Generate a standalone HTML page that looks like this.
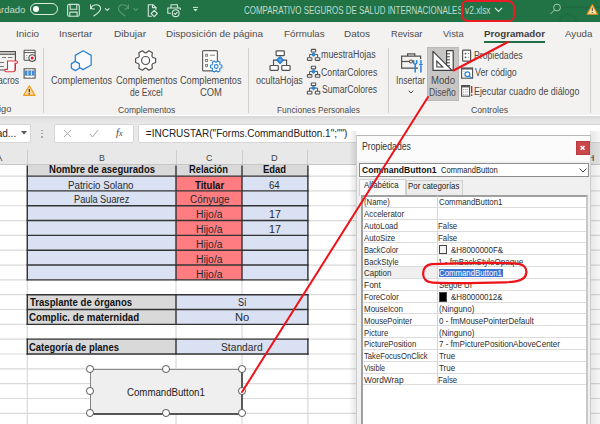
<!DOCTYPE html><html><head><meta charset="utf-8"><style>
*{margin:0;padding:0;box-sizing:border-box}
html,body{width:600px;height:424px;overflow:hidden;background:#fff;font-family:"Liberation Sans",sans-serif}
.a{position:absolute}
.t{position:absolute;white-space:nowrap;line-height:1;transform-origin:0 0}
.sep{position:absolute;width:1px;background:#d2d0ce;top:48px;height:65px}
</style></head><body>
<div class="a" style="left:0;top:0;width:600px;height:21.5px;background:#217346"></div>
<div class="t" style="left:-4.30px;top:4.80px;font-size:9.5px;color:#c3dacb;font-weight:normal;font-family:'Liberation Sans';">ardado</div>
<div class="a" style="left:29.5px;top:3px;width:28.5px;height:12px;border:1.2px solid #dcebe1;border-radius:6px"></div>
<div class="a" style="left:32.5px;top:6px;width:6px;height:6px;background:#fff;border-radius:50%"></div>
<svg class="a" style="left:60px;top:0" width="24" height="22" viewBox="60 0 24 22"><g fill="none" stroke="#d3e6da" stroke-width="1.1" stroke-linejoin="round"><rect x="67.6" y="4.4" width="11.7" height="11.9" rx="1.6"/><path d="M70.2 4.6 V9.2 H76.8 V4.6"/><path d="M69.8 16.2 V12.1 H77.1 V16.2"/></g></svg>
<svg class="a" style="left:0;top:0" width="210" height="22" viewBox="0 0 210 22"><g fill="none" stroke="#d3e6da" stroke-width="1.1" stroke-linecap="round" stroke-linejoin="round"><path d="M90.6 4.8 L90.6 8.6 L94.4 9"/><path d="M90.8 8.4 C92.8 3.6 100.5 3.2 100.5 8.8 C100.5 11.2 97.5 13.6 93.8 16"/><path d="M105.3 8.6 L107.2 10.4 L109.1 8.6"/><path d="M148.3 4.8 H153.2 L156 7.6 V9.5 M148.3 4.8 V16.3 H151.5"/><path d="M152.5 4.8 V7.6 H156"/><path d="M154.2 10.3 L157.3 13.5 L154.2 16.6 L151.1 13.5 Z"/><path d="M171 7.8 V4.8 H177.5 V7.8"/><path d="M170.5 13.3 H167.8 V8 H180.3 V9.5"/><circle cx="175.7" cy="13.2" r="3.4"/><path d="M174.1 13.3 L175.3 14.4 L177.3 12.2"/></g><g fill="none" stroke="#5c9a72" stroke-width="1.1" stroke-linecap="round" stroke-linejoin="round"><path d="M128.4 4.8 L128.4 8.6 L124.6 9"/><path d="M128.2 8.4 C126.2 3.6 118.5 3.2 118.5 8.8 C118.5 11.2 121.5 13.6 125.2 16"/><path d="M134 8.6 L135.9 10.4 L137.8 8.6"/></g><path d="M193 7.4 H198" stroke="#d3e6da" stroke-width="1"/><path d="M193.3 9 L195.5 11.4 L197.7 9 Z" fill="#d3e6da"/></svg>
<div class="t" style="left:243.63px;top:5.50px;font-size:10px;color:#c3dacb;font-weight:normal;font-family:'Liberation Sans';transform:scaleX(0.7946);">COMPARATIVO SEGUROS DE SALUD INTERNACIONALES</div>
<div class="t" style="left:465.00px;top:5.50px;font-size:10px;color:#c3dacb;font-weight:normal;font-family:'Liberation Sans';transform:scaleX(0.8344);">v2.xlsx</div>
<svg class="a" style="left:494px;top:7px" width="9" height="6" viewBox="0 0 9 6"><path d="M1 1 L4.5 4.5 L8 1" fill="none" stroke="#d3e6da" stroke-width="1.1"/></svg>
<svg class="a" style="left:540px;top:0" width="60" height="22" viewBox="540 0 60 22"><path d="M561 7.2 H600" stroke="#1d6a3f" stroke-width="1.6"/><path d="M560 22 A8 8 0 0 1 576 22" fill="none" stroke="#1f6c41" stroke-width="1.6"/><g fill="none" stroke="#a6cbb3" stroke-width="1"><circle cx="557" cy="7.5" r="3.4"/><path d="M554.6 9.9 L550.5 14"/></g><path d="M592.3 4.5 L597.6 14.2 H587 Z" fill="#fbe3a6" stroke="#e8890c" stroke-width="1.1" stroke-linejoin="round"/><path d="M592.3 7.5 V11 M592.3 12 V13" stroke="#555" stroke-width="1.1"/></svg>
<div class="a" style="left:461px;top:-0.5px;width:53.5px;height:22px;border:2px solid #ec1c24;border-radius:6px 7px 6px 7px"></div>
<div class="a" style="left:0;top:22px;width:600px;height:93px;background:#f3f2f1"></div>
<div class="t" style="left:15.53px;top:28.80px;font-size:9.8px;color:#4e4e4e;font-weight:normal;font-family:'Liberation Sans';transform:scaleX(1.0085);">Inicio</div>
<div class="t" style="left:59.03px;top:28.80px;font-size:9.8px;color:#4e4e4e;font-weight:normal;font-family:'Liberation Sans';">Insertar</div>
<div class="t" style="left:113.61px;top:28.80px;font-size:9.8px;color:#4e4e4e;font-weight:normal;font-family:'Liberation Sans';transform:scaleX(1.0320);">Dibujar</div>
<div class="t" style="left:165.93px;top:28.80px;font-size:9.8px;color:#4e4e4e;font-weight:normal;font-family:'Liberation Sans';transform:scaleX(1.0118);">Disposición de página</div>
<div class="t" style="left:283.64px;top:28.80px;font-size:9.8px;color:#4e4e4e;font-weight:normal;font-family:'Liberation Sans';transform:scaleX(0.9957);">Fórmulas</div>
<div class="t" style="left:344.22px;top:28.80px;font-size:9.8px;color:#4e4e4e;font-weight:normal;font-family:'Liberation Sans';transform:scaleX(1.0192);">Datos</div>
<div class="t" style="left:390.88px;top:28.80px;font-size:9.8px;color:#4e4e4e;font-weight:normal;font-family:'Liberation Sans';transform:scaleX(0.9443);">Revisar</div>
<div class="t" style="left:442.70px;top:28.80px;font-size:9.8px;color:#4e4e4e;font-weight:normal;font-family:'Liberation Sans';transform:scaleX(0.9552);">Vista</div>
<div class="t" style="left:564.60px;top:28.80px;font-size:9.8px;color:#4e4e4e;font-weight:normal;font-family:'Liberation Sans';transform:scaleX(0.9902);">Ayuda</div>
<div class="t" style="left:483.79px;top:28.80px;font-size:9.8px;color:#404040;font-weight:bold;font-family:'Liberation Sans';transform:scaleX(0.9920);">Programador</div>
<div class="a" style="left:484px;top:40.5px;width:61px;height:2px;background:#1e7145"></div>
<div class="a" style="left:0;top:115.5px;width:600px;height:8px;background:linear-gradient(#d6d6d6,#e3e3e3 40%,#e8e8e8)"></div>
<div class="sep" style="left:43px"></div>
<div class="sep" style="left:248px"></div>
<div class="sep" style="left:388px"></div>
<div class="sep" style="left:589.5px"></div>
<div class="a" style="left:427px;top:46.5px;width:31.5px;height:54px;background:#c8c6c4;border:1px solid #bcbab8"></div>
<svg class="a" style="left:408px;top:90px" width="6" height="4"><path d="M0.7 0.7 L3 3 L5.3 0.7" fill="none" stroke="#444" stroke-width="1"/></svg>
<svg class="a" style="left:0;top:0" width="600" height="120" viewBox="0 0 600 120"><g fill="none" stroke="#505050" stroke-width="1.2"><path d="M-4 51.6 H15.4 V70 H-4"/><path d="M-4 54.2 H15.4"/></g><g stroke="#777" stroke-width="1"><path d="M2 57.5 H6 M8 57.5 H12.5 M-2 62.5 H4 M-2 66.5 H4"/></g><g fill="#fff" stroke="#e0323c" stroke-width="1.1"><path d="M7.5 61 H16.5 Q17.5 61 17.5 62.2 Q17.5 63.4 16 63.4 H15 V70 Q15 71.8 13 71.8 H6 Q4.8 71.8 4.8 70.6 Q4.8 69.4 6.2 69.4 H7.5 Z"/></g><g fill="#fff" stroke="#505050" stroke-width="1.1"><rect x="24.1" y="50.3" width="11" height="10" rx="0.8"/></g><path d="M24.1 52.6 H35.1" stroke="#505050" stroke-width="1"/><path d="M26 55.5 h1.5 M26 57.8 h1.5" stroke="#888" stroke-width="0.8"/><circle cx="32.2" cy="58.1" r="3.3" fill="#fff" stroke="#505050" stroke-width="1.1"/><circle cx="32.2" cy="58.1" r="1.5" fill="#e81123"/><rect x="24.1" y="68.8" width="11" height="9.3" fill="#fff" stroke="#505050" stroke-width="1.1"/><rect x="24.6" y="70.8" width="10" height="4.6" fill="#3d8ee0"/><path d="M27.8 69 V78 M31.4 69 V78" stroke="#fff" stroke-width="0.8"/><path d="M24.6 70.8 H34.6 M24.6 75.4 H34.6" stroke="#7a7a7a" stroke-width="0.5"/><path d="M29.3 85.8 L35 95.3 H23.6 Z" fill="#fbd89a" stroke="#ec9b1a" stroke-width="1.2" stroke-linejoin="round"/><path d="M29.3 89 V92.3 M29.3 93.3 V94.5" stroke="#333" stroke-width="1.2"/><g fill="#fafafa" stroke="#2b84d4" stroke-width="1.3" stroke-linejoin="round"><path d="M83.1 50.8 L91.2 55.4 V65 L83.1 69.6 L75.3 65 V55.4 Z"/><path d="M75.3 61.4 L79.4 63.6 V68.2 L75.3 70.6 L71.4 68.2 V63.6 Z"/></g><path d="M155.60 58.48 L155.60 62.52 L152.58 63.74 L151.90 64.93 L152.35 68.15 L148.85 70.17 L146.28 68.17 L144.92 68.17 L142.35 70.17 L138.85 68.15 L139.30 64.93 L138.62 63.74 L135.60 62.52 L135.60 58.48 L138.62 57.26 L139.30 56.07 L138.85 52.85 L142.35 50.83 L144.92 52.83 L146.28 52.83 L148.85 50.83 L152.35 52.85 L151.90 56.07 L152.58 57.26 Z" fill="#fff" stroke="#505050" stroke-width="1.2" stroke-linejoin="round"/><circle cx="145.6" cy="60.5" r="4" fill="none" stroke="#505050" stroke-width="1.2"/><rect x="202.6" y="50.6" width="14.8" height="20.3" rx="1" fill="#fff" stroke="#606060" stroke-width="1.2"/><g fill="none" stroke="#777" stroke-width="0.9"><rect x="205.6" y="54.2" width="2" height="2"/><rect x="205.6" y="59.4" width="2" height="2"/><rect x="205.6" y="64.4" width="2" height="2"/><path d="M209.8 55.2 H215 M209.8 60.4 H212.5"/></g><path d="M221.89 65.35 L221.89 67.65 L220.10 68.31 L219.72 68.97 L220.04 70.85 L218.05 72.00 L216.58 70.78 L215.82 70.78 L214.35 72.00 L212.36 70.85 L212.68 68.97 L212.30 68.31 L210.51 67.65 L210.51 65.35 L212.30 64.69 L212.68 64.03 L212.36 62.15 L214.35 61.00 L215.82 62.22 L216.58 62.22 L218.05 61.00 L220.04 62.15 L219.72 64.03 L220.10 64.69 Z" fill="#fff" stroke="#2b84d4" stroke-width="1.1" stroke-linejoin="round"/><circle cx="216.2" cy="66.5" r="1.9" fill="none" stroke="#2b84d4" stroke-width="1.1"/><g fill="#fff" stroke="#505050" stroke-width="1.2"><rect x="276.1" y="50.8" width="8.2" height="4.9" rx="0.8"/><rect x="270" y="65.5" width="8.3" height="4.9" rx="0.8"/><rect x="281.8" y="65.5" width="8.3" height="4.9" rx="0.8"/></g><path d="M273.5 65.5 V60.1 H286.6 V65.5" fill="none" stroke="#505050" stroke-width="1.1"/><path d="M280.1 56.2 L284 60.1 L280.1 64 L276.2 60.1 Z" fill="#2b84d4" stroke="#1f6fbf" stroke-width="0.6"/><path d="M280.1 58.6 L281.6 60.1 L280.1 61.6 L278.6 60.1 Z" fill="#7bb6ea"/><g fill="#fff" stroke="#505050" stroke-width="1.1"><rect x="311.3" y="49.40" width="4.4" height="2.6" rx="0.6"/><rect x="307.4" y="57.70" width="4.5" height="2.7" rx="0.6"/><rect x="315.3" y="57.70" width="4.5" height="2.7" rx="0.6"/></g><path d="M309.6 57.70 V54.50 H317.6 V57.70" fill="none" stroke="#505050" stroke-width="1"/><path d="M313.5 52.10 L316 54.50 L313.5 57.00 L311 54.50 Z" fill="#2b84d4"/><g fill="#fff" stroke="#505050" stroke-width="1.1"><rect x="311.3" y="66.30" width="4.4" height="2.6" rx="0.6"/><rect x="307.4" y="74.60" width="4.5" height="2.7" rx="0.6"/><rect x="315.3" y="74.60" width="4.5" height="2.7" rx="0.6"/></g><path d="M309.6 74.60 V71.40 H317.6 V74.60" fill="none" stroke="#505050" stroke-width="1"/><path d="M313.5 69.00 L316 71.40 L313.5 73.90 L311 71.40 Z" fill="#2b84d4"/><g fill="#fff" stroke="#505050" stroke-width="1.1"><rect x="311.3" y="83.00" width="4.4" height="2.6" rx="0.6"/><rect x="307.4" y="91.30" width="4.5" height="2.7" rx="0.6"/><rect x="315.3" y="91.30" width="4.5" height="2.7" rx="0.6"/></g><path d="M309.6 91.30 V88.10 H317.6 V91.30" fill="none" stroke="#505050" stroke-width="1"/><path d="M313.5 85.70 L316 88.10 L313.5 90.60 L311 88.10 Z" fill="#2b84d4"/><g fill="none" stroke="#505050" stroke-width="1.2"><path d="M407.6 56 V53.8 H414.8 V56"/><path d="M418 68.2 H401.6 V56.2 H420.6 V59"/><path d="M401.6 61.5 H409.5"/></g><circle cx="411" cy="61.5" r="1.5" fill="#fff" stroke="#505050" stroke-width="1.1"/><g fill="none" stroke="#2b84d4" stroke-width="1.5" stroke-linecap="round"><path d="M415.2 64.5 V72"/><path d="M413.7 60.8 V63.2 Q415.2 65.5 416.7 63.2 V60.8"/><path d="M420.9 60.5 V63 M420.9 66 V72 M419.8 64.5 H422"/></g><g fill="#fff" stroke="#404040" stroke-width="1.2" stroke-linejoin="round"><rect x="446.6" y="50.6" width="6.6" height="19.8"/><path d="M433 51.4 L452 70.4 H433 Z"/></g><path d="M436.8 61 V67 H442.8 Z" fill="#fff" stroke="#404040" stroke-width="1.1"/><path d="M446.8 53.8 H450 M446.8 56.8 H450 M446.8 59.8 H450 M446.8 62.8 H450 M446.8 65.8 H450" stroke="#404040" stroke-width="1"/><rect x="462.6" y="50.2" width="8" height="10.9" rx="0.8" fill="#fff" stroke="#505050" stroke-width="1.2"/><circle cx="465.5" cy="53.6" r="0.9" fill="#505050"/><circle cx="465.5" cy="57.3" r="0.9" fill="#505050"/><path d="M468.2 53.6 h0.8 M468.2 57.3 h0.8" stroke="#505050" stroke-width="0.9"/><rect x="461.6" y="68" width="11" height="10.2" fill="#fff" stroke="#505050" stroke-width="1.1"/><path d="M461.6 68.8 H472.6" stroke="#505050" stroke-width="1.4"/><path d="M463.5 71.5 h1 M463.5 74 h1 M463.5 76.3 h1" stroke="#999" stroke-width="0.8"/><circle cx="467.4" cy="74.2" r="2.4" fill="#fff" stroke="#2b84d4" stroke-width="1.2"/><path d="M469.2 76 L472.2 78.8" stroke="#2b84d4" stroke-width="1.3"/><rect x="461.6" y="85.6" width="8" height="10.6" fill="#fff" stroke="#505050" stroke-width="1.1"/><path d="M461.6 86.6 H469.6" stroke="#505050" stroke-width="1.6"/><path d="M463 89.5 H468.5 M463 92 H468.5 M463 94.4 H468.5" stroke="#888" stroke-width="0.8" stroke-dasharray="1 0.8"/><path d="M471.7 86 V93 M471.7 94.3 V96" stroke="#e81123" stroke-width="1.3"/></svg>
<div class="t" style="left:-0.58px;top:105.30px;font-size:9.3px;color:#4c4c4c;font-weight:normal;font-family:'Liberation Sans';transform:scaleX(0.9954);">igo</div>
<div class="t" style="left:117.60px;top:105.50px;font-size:9.3px;color:#4c4c4c;font-weight:normal;font-family:'Liberation Sans';transform:scaleX(0.9172);">Complementos</div>
<div class="t" style="left:277.35px;top:105.50px;font-size:9.3px;color:#4c4c4c;font-weight:normal;font-family:'Liberation Sans';transform:scaleX(0.9011);">Funciones Personales</div>
<div class="t" style="left:470.79px;top:105.50px;font-size:9.3px;color:#4c4c4c;font-weight:normal;font-family:'Liberation Sans';transform:scaleX(0.9341);">Controles</div>
<div class="t" style="left:-1.57px;top:75.80px;font-size:10px;color:#4a4a4a;font-weight:normal;font-family:'Liberation Sans';transform:scaleX(0.8645);">acros</div>
<div class="t" style="left:51.27px;top:75.80px;font-size:10px;color:#4a4a4a;font-weight:normal;font-family:'Liberation Sans';transform:scaleX(0.9072);">Complementos</div>
<div class="t" style="left:115.57px;top:75.80px;font-size:10px;color:#4a4a4a;font-weight:normal;font-family:'Liberation Sans';transform:scaleX(0.9117);">Complementos</div>
<div class="t" style="left:130.34px;top:87.60px;font-size:10px;color:#4a4a4a;font-weight:normal;font-family:'Liberation Sans';transform:scaleX(0.8480);">de Excel</div>
<div class="t" style="left:179.57px;top:75.80px;font-size:10px;color:#4a4a4a;font-weight:normal;font-family:'Liberation Sans';transform:scaleX(0.9147);">Complementos</div>
<div class="t" style="left:199.56px;top:87.60px;font-size:10px;color:#4a4a4a;font-weight:normal;font-family:'Liberation Sans';transform:scaleX(0.9375);">COM</div>
<div class="t" style="left:255.72px;top:75.80px;font-size:10px;color:#4a4a4a;font-weight:normal;font-family:'Liberation Sans';transform:scaleX(0.8968);">ocultaHojas</div>
<div class="t" style="left:321.25px;top:50.20px;font-size:10px;color:#4a4a4a;font-weight:normal;font-family:'Liberation Sans';transform:scaleX(0.8856);">muestraHojas</div>
<div class="t" style="left:321.39px;top:67.80px;font-size:10px;color:#4a4a4a;font-weight:normal;font-family:'Liberation Sans';transform:scaleX(0.8730);">ContarColores</div>
<div class="t" style="left:321.53px;top:84.50px;font-size:10px;color:#4a4a4a;font-weight:normal;font-family:'Liberation Sans';transform:scaleX(0.8612);">SumarColores</div>
<div class="t" style="left:396.33px;top:76.00px;font-size:10px;color:#4a4a4a;font-weight:normal;font-family:'Liberation Sans';transform:scaleX(0.8557);">Insertar</div>
<div class="t" style="left:430.55px;top:76.00px;font-size:10px;color:#4a4a4a;font-weight:normal;font-family:'Liberation Sans';transform:scaleX(0.9610);">Modo</div>
<div class="t" style="left:429.33px;top:87.60px;font-size:10px;color:#4a4a4a;font-weight:normal;font-family:'Liberation Sans';transform:scaleX(0.8617);">Diseño</div>
<div class="t" style="left:474.02px;top:50.50px;font-size:10px;color:#4a4a4a;font-weight:normal;font-family:'Liberation Sans';transform:scaleX(0.8663);">Propiedades</div>
<div class="t" style="left:474.70px;top:68.20px;font-size:10px;color:#4a4a4a;font-weight:normal;font-family:'Liberation Sans';transform:scaleX(0.8837);">Ver código</div>
<div class="t" style="left:474.01px;top:86.80px;font-size:10px;color:#4a4a4a;font-weight:normal;font-family:'Liberation Sans';transform:scaleX(0.8855);">Ejecutar cuadro de diálogo</div>
<div class="a" style="left:0;top:123.5px;width:600px;height:41.5px;background:#e8e8e8"></div>
<div class="a" style="left:-3px;top:124px;width:33.5px;height:18.5px;background:#fff;border:1px solid #d6d6d6;border-radius:2px"></div>
<div class="t" style="left:-3.31px;top:129.00px;font-size:10px;color:#222;font-weight:normal;font-family:'Liberation Sans';">ad...</div>
<svg class="a" style="left:21px;top:131px" width="6" height="4"><path d="M0 0 H6 L3 3.5 Z" fill="#555"/></svg>
<div class="a" style="left:41.3px;top:129.6px;width:1.4px;height:1.4px;background:#9a9a9a;border-radius:50%"></div>
<div class="a" style="left:41.3px;top:132.9px;width:1.4px;height:1.4px;background:#9a9a9a;border-radius:50%"></div>
<div class="a" style="left:41.3px;top:136.2px;width:1.4px;height:1.4px;background:#9a9a9a;border-radius:50%"></div>
<div class="a" style="left:53.5px;top:124px;width:80px;height:18.5px;background:#fff;border:1px solid #d6d6d6;border-radius:2px"></div>
<svg class="a" style="left:63px;top:129px" width="9" height="9"><path d="M1 1 L8 8 M8 1 L1 8" stroke="#a6a6a6" stroke-width="1"/></svg>
<svg class="a" style="left:89px;top:129px" width="10" height="9"><path d="M1 5 L3.5 8 L9 1" fill="none" stroke="#a6a6a6" stroke-width="1"/></svg>
<div class="t" style="left:116px;top:128px;font-size:10.5px;color:#444;font-family:'Liberation Serif',serif;font-style:italic">f<span style="font-size:8px">x</span></div>
<div class="a" style="left:137.5px;top:124px;width:470px;height:18.5px;background:#fff;border:1px solid #d6d6d6;border-radius:2px"></div>
<div class="t" style="left:145.83px;top:129.20px;font-size:10px;color:#222;font-weight:normal;font-family:'Liberation Sans';">=INCRUSTAR("Forms.CommandButton.1";"")</div>
<div class="a" style="left:0;top:164px;width:600px;height:1px;background:#c6c6c6"></div>
<div class="a" style="left:27px;top:150px;width:1px;height:14px;background:#cdcdcd"></div>
<div class="a" style="left:176px;top:150px;width:1px;height:14px;background:#cdcdcd"></div>
<div class="a" style="left:242px;top:150px;width:1px;height:14px;background:#cdcdcd"></div>
<div class="a" style="left:307px;top:150px;width:1px;height:14px;background:#cdcdcd"></div>
<div class="a" style="left:373px;top:150px;width:1px;height:14px;background:#cdcdcd"></div>
<div class="a" style="left:439px;top:150px;width:1px;height:14px;background:#cdcdcd"></div>
<div class="a" style="left:505px;top:150px;width:1px;height:14px;background:#cdcdcd"></div>
<div class="a" style="left:571px;top:150px;width:1px;height:14px;background:#cdcdcd"></div>
<div class="t" style="left:-4.00px;top:152.70px;font-size:9.5px;color:#444;font-weight:normal;font-family:'Liberation Sans';">A</div>
<div class="t" style="left:98.91px;top:152.70px;font-size:9.5px;color:#444;font-weight:normal;font-family:'Liberation Sans';transform:scaleX(0.9239);">B</div>
<div class="t" style="left:205.58px;top:152.70px;font-size:9.5px;color:#444;font-weight:normal;font-family:'Liberation Sans';transform:scaleX(0.9366);">C</div>
<div class="t" style="left:271.28px;top:152.70px;font-size:9.5px;color:#444;font-weight:normal;font-family:'Liberation Sans';transform:scaleX(0.9673);">D</div>
<div class="t" style="left:586.99px;top:152.70px;font-size:9.5px;color:#444;font-weight:normal;font-family:'Liberation Sans';transform:scaleX(1.0854);">H</div>
<div class="a" style="left:0;top:165px;width:600px;height:259px;background:#fff"></div>
<svg class="a" style="left:0;top:0" width="600" height="424" viewBox="0 0 600 424"><path d="M0 176.10 H600" stroke="#d9d9d9" stroke-width="1.2"/><path d="M0 190.92 H600" stroke="#d9d9d9" stroke-width="1.2"/><path d="M0 205.75 H600" stroke="#d9d9d9" stroke-width="1.2"/><path d="M0 220.57 H600" stroke="#d9d9d9" stroke-width="1.2"/><path d="M0 235.40 H600" stroke="#d9d9d9" stroke-width="1.2"/><path d="M0 250.22 H600" stroke="#d9d9d9" stroke-width="1.2"/><path d="M0 265.05 H600" stroke="#d9d9d9" stroke-width="1.2"/><path d="M0 279.88 H600" stroke="#d9d9d9" stroke-width="1.2"/><path d="M0 294.70 H600" stroke="#d9d9d9" stroke-width="1.2"/><path d="M0 309.52 H600" stroke="#d9d9d9" stroke-width="1.2"/><path d="M0 324.35 H600" stroke="#d9d9d9" stroke-width="1.2"/><path d="M0 339.17 H600" stroke="#d9d9d9" stroke-width="1.2"/><path d="M0 354.00 H600" stroke="#d9d9d9" stroke-width="1.2"/><path d="M0 368.82 H600" stroke="#d9d9d9" stroke-width="1.2"/><path d="M0 383.65 H600" stroke="#d9d9d9" stroke-width="1.2"/><path d="M0 398.48 H600" stroke="#d9d9d9" stroke-width="1.2"/><path d="M0 413.30 H600" stroke="#d9d9d9" stroke-width="1.2"/><path d="M27.3 165 V424" stroke="#d9d9d9" stroke-width="1.2"/><path d="M176 165 V424" stroke="#d9d9d9" stroke-width="1.2"/><path d="M242 165 V424" stroke="#d9d9d9" stroke-width="1.2"/><path d="M307.9 165 V424" stroke="#d9d9d9" stroke-width="1.2"/><path d="M373.8 165 V424" stroke="#d9d9d9" stroke-width="1.2"/><path d="M439.7 165 V424" stroke="#d9d9d9" stroke-width="1.2"/><path d="M505.6 165 V424" stroke="#d9d9d9" stroke-width="1.2"/><path d="M571.5 165 V424" stroke="#d9d9d9" stroke-width="1.2"/><rect x="27.3" y="165.00" width="280.60" height="11.10" fill="#d9d9d9"/><rect x="27.3" y="176.10" width="148.70" height="14.82" fill="#d9e1f2"/><rect x="176" y="176.10" width="66.00" height="14.82" fill="#ff7c80"/><rect x="242" y="176.10" width="65.90" height="14.82" fill="#d9e1f2"/><rect x="27.3" y="190.92" width="148.70" height="14.83" fill="#d9e1f2"/><rect x="176" y="190.92" width="66.00" height="14.83" fill="#ff7c80"/><rect x="242" y="190.92" width="65.90" height="14.83" fill="#d9e1f2"/><rect x="27.3" y="205.75" width="148.70" height="14.82" fill="#d9e1f2"/><rect x="176" y="205.75" width="66.00" height="14.82" fill="#ff7c80"/><rect x="242" y="205.75" width="65.90" height="14.82" fill="#d9e1f2"/><rect x="27.3" y="220.57" width="148.70" height="14.82" fill="#d9e1f2"/><rect x="176" y="220.57" width="66.00" height="14.82" fill="#ff7c80"/><rect x="242" y="220.57" width="65.90" height="14.82" fill="#d9e1f2"/><rect x="27.3" y="235.40" width="148.70" height="14.83" fill="#d9e1f2"/><rect x="176" y="235.40" width="66.00" height="14.83" fill="#ff7c80"/><rect x="242" y="235.40" width="65.90" height="14.83" fill="#d9e1f2"/><rect x="27.3" y="250.22" width="148.70" height="14.82" fill="#d9e1f2"/><rect x="176" y="250.22" width="66.00" height="14.82" fill="#ff7c80"/><rect x="242" y="250.22" width="65.90" height="14.82" fill="#d9e1f2"/><rect x="27.3" y="265.05" width="148.70" height="14.83" fill="#d9e1f2"/><rect x="176" y="265.05" width="66.00" height="14.83" fill="#ff7c80"/><rect x="242" y="265.05" width="65.90" height="14.83" fill="#d9e1f2"/><path d="M26.6 176.10 H308.59999999999997" stroke="#333" stroke-width="1.4"/><path d="M26.6 190.92 H308.59999999999997" stroke="#333" stroke-width="1.4"/><path d="M26.6 205.75 H308.59999999999997" stroke="#333" stroke-width="1.4"/><path d="M26.6 220.57 H308.59999999999997" stroke="#333" stroke-width="1.4"/><path d="M26.6 235.40 H308.59999999999997" stroke="#333" stroke-width="1.4"/><path d="M26.6 250.22 H308.59999999999997" stroke="#333" stroke-width="1.4"/><path d="M26.6 265.05 H308.59999999999997" stroke="#333" stroke-width="1.4"/><path d="M26.6 279.88 H308.59999999999997" stroke="#333" stroke-width="1.4"/><path d="M27.3 165.5 V280.57" stroke="#333" stroke-width="1.4"/><path d="M176 165.5 V280.57" stroke="#333" stroke-width="1.4"/><path d="M242 165.5 V280.57" stroke="#333" stroke-width="1.4"/><path d="M307.9 165.5 V280.57" stroke="#333" stroke-width="1.4"/><rect x="27.3" y="294.70" width="148.70" height="29.65" fill="#d9d9d9"/><rect x="176" y="294.70" width="131.90" height="29.65" fill="#d9e1f2"/><path d="M26.6 294.70 H308.59999999999997" stroke="#333" stroke-width="1.4"/><path d="M26.6 309.52 H308.59999999999997" stroke="#333" stroke-width="1.4"/><path d="M26.6 324.35 H308.59999999999997" stroke="#333" stroke-width="1.4"/><path d="M27.3 294.00 V325.05" stroke="#333" stroke-width="1.4"/><path d="M176 294.00 V325.05" stroke="#333" stroke-width="1.4"/><path d="M307.9 294.00 V325.05" stroke="#333" stroke-width="1.4"/><rect x="27.3" y="339.17" width="148.70" height="14.83" fill="#d9d9d9"/><rect x="176" y="339.17" width="131.90" height="14.83" fill="#d9e1f2"/><path d="M26.6 339.17 H308.59999999999997" stroke="#333" stroke-width="1.4"/><path d="M26.6 354.00 H308.59999999999997" stroke="#333" stroke-width="1.4"/><path d="M27.3 338.47 V354.70" stroke="#333" stroke-width="1.4"/><path d="M176 338.47 V354.70" stroke="#333" stroke-width="1.4"/><path d="M307.9 338.47 V354.70" stroke="#333" stroke-width="1.4"/></svg>
<div class="t" style="left:49.15px;top:165.40px;font-size:10px;color:#111;font-weight:bold;font-family:'Liberation Sans';transform:scaleX(0.9540);">Nombre de asegurados</div>
<div class="t" style="left:189.21px;top:165.40px;font-size:10px;color:#111;font-weight:bold;font-family:'Liberation Sans';transform:scaleX(0.9366);">Relación</div>
<div class="t" style="left:262.91px;top:165.40px;font-size:10px;color:#111;font-weight:bold;font-family:'Liberation Sans';transform:scaleX(0.9446);">Edad</div>
<div class="t" style="left:68.49px;top:180.60px;font-size:10px;color:#2a2a2a;font-weight:normal;font-family:'Liberation Sans';transform:scaleX(0.9739);">Patricio Solano</div>
<div class="t" style="left:73.88px;top:195.43px;font-size:10px;color:#2a2a2a;font-weight:normal;font-family:'Liberation Sans';transform:scaleX(0.9211);">Paula Suarez</div>
<div class="t" style="left:195.00px;top:180.60px;font-size:10px;color:#111;font-weight:bold;font-family:'Liberation Sans';transform:scaleX(0.9592);">Titular</div>
<div class="t" style="left:189.54px;top:195.43px;font-size:10px;color:#2a2a2a;font-weight:normal;font-family:'Liberation Sans';transform:scaleX(0.9896);">Cónyuge</div>
<div class="t" style="left:195.89px;top:210.25px;font-size:10px;color:#2a2a2a;font-weight:normal;font-family:'Liberation Sans';transform:scaleX(1.0383);">Hijo/a</div>
<div class="t" style="left:195.89px;top:225.08px;font-size:10px;color:#2a2a2a;font-weight:normal;font-family:'Liberation Sans';transform:scaleX(1.0383);">Hijo/a</div>
<div class="t" style="left:195.89px;top:239.90px;font-size:10px;color:#2a2a2a;font-weight:normal;font-family:'Liberation Sans';transform:scaleX(1.0383);">Hijo/a</div>
<div class="t" style="left:195.89px;top:254.73px;font-size:10px;color:#2a2a2a;font-weight:normal;font-family:'Liberation Sans';transform:scaleX(1.0383);">Hijo/a</div>
<div class="t" style="left:195.89px;top:269.55px;font-size:10px;color:#2a2a2a;font-weight:normal;font-family:'Liberation Sans';transform:scaleX(1.0383);">Hijo/a</div>
<div class="t" style="left:269.30px;top:180.60px;font-size:10px;color:#2a2a2a;font-weight:normal;font-family:'Liberation Sans';transform:scaleX(0.9659);">64</div>
<div class="t" style="left:269.33px;top:210.25px;font-size:10px;color:#2a2a2a;font-weight:normal;font-family:'Liberation Sans';transform:scaleX(1.0701);">17</div>
<div class="t" style="left:269.33px;top:225.08px;font-size:10px;color:#2a2a2a;font-weight:normal;font-family:'Liberation Sans';transform:scaleX(1.0701);">17</div>
<div class="t" style="left:29.50px;top:298.30px;font-size:10px;color:#111;font-weight:bold;font-family:'Liberation Sans';transform:scaleX(0.9573);">Trasplante de órganos</div>
<div class="t" style="left:29.20px;top:313.10px;font-size:10px;color:#111;font-weight:bold;font-family:'Liberation Sans';transform:scaleX(0.9720);">Complic. de maternidad</div>
<div class="t" style="left:237.72px;top:298.30px;font-size:10px;color:#2a2a2a;font-weight:normal;font-family:'Liberation Sans';transform:scaleX(0.8997);">Sí</div>
<div class="t" style="left:234.87px;top:313.10px;font-size:10px;color:#2a2a2a;font-weight:normal;font-family:'Liberation Sans';transform:scaleX(1.1210);">No</div>
<div class="t" style="left:29.20px;top:342.80px;font-size:10px;color:#111;font-weight:bold;font-family:'Liberation Sans';transform:scaleX(0.9463);">Categoría de planes</div>
<div class="t" style="left:220.93px;top:342.80px;font-size:10px;color:#2a2a2a;font-weight:normal;font-family:'Liberation Sans';transform:scaleX(1.0261);">Standard</div>
<div class="a" style="left:89.5px;top:368.5px;width:153.5px;height:46px;background:#efefef;border-top:1.5px solid #8a8a8a;border-left:1.3px solid #858585;border-right:2px solid #5a5a5a;border-bottom:2px solid #555"></div>
<div class="t" style="left:127.05px;top:388.00px;font-size:10px;color:#222;font-weight:normal;font-family:'Liberation Sans';transform:scaleX(0.9658);">CommandButton1</div>
<div class="a" style="left:86.10px;top:365.00px;width:7.8px;height:7.8px;border-radius:50%;background:#fff;border:1.5px solid #555"></div>
<div class="a" style="left:86.10px;top:387.40px;width:7.8px;height:7.8px;border-radius:50%;background:#fff;border:1.5px solid #555"></div>
<div class="a" style="left:86.10px;top:409.40px;width:7.8px;height:7.8px;border-radius:50%;background:#fff;border:1.5px solid #555"></div>
<div class="a" style="left:162.30px;top:365.00px;width:7.8px;height:7.8px;border-radius:50%;background:#fff;border:1.5px solid #555"></div>
<div class="a" style="left:162.30px;top:409.40px;width:7.8px;height:7.8px;border-radius:50%;background:#fff;border:1.5px solid #555"></div>
<div class="a" style="left:238.30px;top:365.00px;width:7.8px;height:7.8px;border-radius:50%;background:#fff;border:1.5px solid #555"></div>
<div class="a" style="left:238.30px;top:387.40px;width:7.8px;height:7.8px;border-radius:50%;background:#fff;border:1.5px solid #555"></div>
<div class="a" style="left:238.30px;top:409.40px;width:7.8px;height:7.8px;border-radius:50%;background:#fff;border:1.5px solid #555"></div>
<div class="a" style="left:349px;top:131px;width:7px;height:293px;background:linear-gradient(to right,rgba(0,0,0,0),rgba(0,0,0,0.1))"></div>
<div class="a" style="left:590px;top:131px;width:10px;height:293px;background:linear-gradient(to right,rgba(0,0,0,0.1),rgba(0,0,0,0.03))"></div>
<div class="a" style="left:355.5px;top:134.5px;width:235.5px;height:290px;background:#f0f0f0;border:1px solid #cdcdcd;border-top-color:#b8b8b8"></div>
<div class="a" style="left:356.5px;top:135.5px;width:233.5px;height:25px;background:#fbfbfb"></div>
<div class="t" style="left:361.72px;top:142.00px;font-size:10px;color:#333;font-weight:normal;font-family:'Liberation Sans';transform:scaleX(0.8718);">Propiedades</div>
<div class="a" style="left:575.6px;top:140.9px;width:14px;height:13.8px;background:#c9484c;border:0.6px solid #bf3a3e"></div>
<svg class="a" style="left:575px;top:140px" width="16" height="16" viewBox="575 140 16 16"><path d="M580.6 146 L584.5 149.8 M584.5 146 L580.6 149.8" stroke="#fff" stroke-width="1.5"/></svg>
<div class="a" style="left:358.5px;top:162.5px;width:230px;height:14px;background:#fff;border:1px solid #8c8c8c"></div>
<div class="t" style="left:361.73px;top:164.60px;font-size:9.5px;color:#111;font-weight:bold;font-family:'Liberation Sans';transform:scaleX(0.9047);">CommandButton1</div>
<div class="t" style="left:440.65px;top:164.60px;font-size:9.5px;color:#222;font-weight:normal;font-family:'Liberation Sans';transform:scaleX(0.7965);">CommandButton</div>
<svg class="a" style="left:579px;top:167.5px" width="8" height="5"><path d="M0.5 0.5 L4 4 L7.5 0.5" fill="none" stroke="#444" stroke-width="1"/></svg>
<div class="a" style="left:405.5px;top:180px;width:57px;height:15px;background:#ececec;border:1px solid #d0d0d0;border-bottom:none"></div>
<div class="t" style="left:407.78px;top:182.40px;font-size:9.3px;color:#222;font-weight:normal;font-family:'Liberation Sans';transform:scaleX(0.8509);">Por categorías</div>
<div class="a" style="left:359px;top:178.5px;width:46.5px;height:17px;background:#f9f9f9;border:1px solid #d0d0d0;border-bottom:none"></div>
<div class="t" style="left:364.40px;top:181.00px;font-size:9.3px;color:#222;font-weight:normal;font-family:'Liberation Sans';transform:scaleX(0.8459);">Alfabética</div>
<div class="a" style="left:361px;top:195px;width:227px;height:240px;background:#fff;border-top:2px solid #a0a0a0;border-left:2px solid #a0a0a0;border-right:2.5px solid #c8c8cc"></div>
<div class="a" style="left:437px;top:196px;width:1px;height:189.44px;background:#d4d4d4"></div>
<div class="a" style="left:363px;top:206.84px;width:223px;height:1px;background:#dcdcdc"></div>
<div class="t" style="left:363.94px;top:198.30px;font-size:9.3px;color:#2c2c2c;font-weight:normal;font-family:'Liberation Sans';transform:scaleX(0.8310);">(Name)</div>
<div class="t" style="left:438.63px;top:198.30px;font-size:9.3px;color:#2c2c2c;font-weight:normal;font-family:'Liberation Sans';transform:scaleX(0.8470);">CommandButton1</div>
<div class="a" style="left:363px;top:218.68px;width:223px;height:1px;background:#dcdcdc"></div>
<div class="t" style="left:364.30px;top:210.14px;font-size:9.3px;color:#2c2c2c;font-weight:normal;font-family:'Liberation Sans';transform:scaleX(0.8512);">Accelerator</div>
<div class="a" style="left:363px;top:230.52px;width:223px;height:1px;background:#dcdcdc"></div>
<div class="t" style="left:364.30px;top:221.98px;font-size:9.3px;color:#2c2c2c;font-weight:normal;font-family:'Liberation Sans';transform:scaleX(0.8499);">AutoLoad</div>
<div class="t" style="left:438.39px;top:221.98px;font-size:9.3px;color:#2c2c2c;font-weight:normal;font-family:'Liberation Sans';transform:scaleX(0.8457);">False</div>
<div class="a" style="left:363px;top:242.36px;width:223px;height:1px;background:#dcdcdc"></div>
<div class="t" style="left:364.30px;top:233.82px;font-size:9.3px;color:#2c2c2c;font-weight:normal;font-family:'Liberation Sans';transform:scaleX(0.8386);">AutoSize</div>
<div class="t" style="left:438.39px;top:233.82px;font-size:9.3px;color:#2c2c2c;font-weight:normal;font-family:'Liberation Sans';transform:scaleX(0.8457);">False</div>
<div class="a" style="left:363px;top:254.20px;width:223px;height:1px;background:#dcdcdc"></div>
<div class="t" style="left:363.72px;top:245.66px;font-size:9.3px;color:#2c2c2c;font-weight:normal;font-family:'Liberation Sans';transform:scaleX(0.8000);">BackColor</div>
<div class="a" style="left:439px;top:244.66px;width:8px;height:9.5px;background:#f4f4f4;border:1px solid #444"></div>
<div class="t" style="left:450.75px;top:245.66px;font-size:9.3px;color:#2c2c2c;font-weight:normal;font-family:'Liberation Sans';transform:scaleX(0.8529);">&H8000000F&</div>
<div class="a" style="left:363px;top:266.04px;width:223px;height:1px;background:#dcdcdc"></div>
<div class="t" style="left:363.69px;top:257.50px;font-size:9.3px;color:#2c2c2c;font-weight:normal;font-family:'Liberation Sans';transform:scaleX(0.8348);">BackStyle</div>
<div class="t" style="left:438.49px;top:257.50px;font-size:9.3px;color:#2c2c2c;font-weight:normal;font-family:'Liberation Sans';transform:scaleX(0.8689);">1 - fmBackStyleOpaque</div>
<div class="a" style="left:363px;top:267.04px;width:74px;height:10.84px;background:#efefef"></div>
<div class="a" style="left:363px;top:277.88px;width:223px;height:1px;background:#dcdcdc"></div>
<div class="t" style="left:363.93px;top:269.34px;font-size:9.3px;color:#2c2c2c;font-weight:normal;font-family:'Liberation Sans';transform:scaleX(0.8554);">Caption</div>
<div class="a" style="left:439px;top:268.64px;width:64px;height:8.6px;background:#3876d6"></div>
<div class="t" style="left:439.13px;top:269.34px;font-size:9.3px;color:#fff;font-weight:normal;font-family:'Liberation Sans';transform:scaleX(0.8402);">CommandButton1</div>
<div class="a" style="left:363px;top:289.72px;width:223px;height:1px;background:#dcdcdc"></div>
<div class="t" style="left:363.64px;top:281.18px;font-size:9.3px;color:#2c2c2c;font-weight:normal;font-family:'Liberation Sans';transform:scaleX(0.9043);">Font</div>
<div class="t" style="left:438.75px;top:281.18px;font-size:9.3px;color:#2c2c2c;font-weight:normal;font-family:'Liberation Sans';transform:scaleX(0.8500);">Segoe UI</div>
<div class="a" style="left:363px;top:301.56px;width:223px;height:1px;background:#dcdcdc"></div>
<div class="t" style="left:363.69px;top:293.02px;font-size:9.3px;color:#2c2c2c;font-weight:normal;font-family:'Liberation Sans';transform:scaleX(0.8429);">ForeColor</div>
<div class="a" style="left:439px;top:292.02px;width:8px;height:9.5px;background:#000;border:1px solid #444"></div>
<div class="t" style="left:450.75px;top:293.02px;font-size:9.3px;color:#2c2c2c;font-weight:normal;font-family:'Liberation Sans';transform:scaleX(0.8526);">&H80000012&</div>
<div class="a" style="left:363px;top:313.40px;width:223px;height:1px;background:#dcdcdc"></div>
<div class="t" style="left:363.68px;top:304.86px;font-size:9.3px;color:#2c2c2c;font-weight:normal;font-family:'Liberation Sans';transform:scaleX(0.8566);">MouseIcon</div>
<div class="t" style="left:438.62px;top:304.86px;font-size:9.3px;color:#2c2c2c;font-weight:normal;font-family:'Liberation Sans';transform:scaleX(0.8692);">(Ninguno)</div>
<div class="a" style="left:363px;top:325.24px;width:223px;height:1px;background:#dcdcdc"></div>
<div class="t" style="left:363.69px;top:316.70px;font-size:9.3px;color:#2c2c2c;font-weight:normal;font-family:'Liberation Sans';transform:scaleX(0.8373);">MousePointer</div>
<div class="t" style="left:438.75px;top:316.70px;font-size:9.3px;color:#2c2c2c;font-weight:normal;font-family:'Liberation Sans';transform:scaleX(0.8563);">0 - fmMousePointerDefault</div>
<div class="a" style="left:363px;top:337.08px;width:223px;height:1px;background:#dcdcdc"></div>
<div class="t" style="left:363.69px;top:328.54px;font-size:9.3px;color:#2c2c2c;font-weight:normal;font-family:'Liberation Sans';transform:scaleX(0.8369);">Picture</div>
<div class="t" style="left:438.62px;top:328.54px;font-size:9.3px;color:#2c2c2c;font-weight:normal;font-family:'Liberation Sans';transform:scaleX(0.8692);">(Ninguno)</div>
<div class="a" style="left:363px;top:348.92px;width:223px;height:1px;background:#dcdcdc"></div>
<div class="t" style="left:363.69px;top:340.38px;font-size:9.3px;color:#2c2c2c;font-weight:normal;font-family:'Liberation Sans';transform:scaleX(0.8424);">PicturePosition</div>
<div class="t" style="left:438.62px;top:340.38px;font-size:9.3px;color:#2c2c2c;font-weight:normal;font-family:'Liberation Sans';transform:scaleX(0.8639);">7 - fmPicturePositionAboveCenter</div>
<div class="a" style="left:363px;top:360.76px;width:223px;height:1px;background:#dcdcdc"></div>
<div class="t" style="left:364.18px;top:352.22px;font-size:9.3px;color:#2c2c2c;font-weight:normal;font-family:'Liberation Sans';transform:scaleX(0.8217);">TakeFocusOnClick</div>
<div class="t" style="left:438.88px;top:352.22px;font-size:9.3px;color:#2c2c2c;font-weight:normal;font-family:'Liberation Sans';transform:scaleX(0.8600);">True</div>
<div class="a" style="left:363px;top:372.60px;width:223px;height:1px;background:#dcdcdc"></div>
<div class="t" style="left:364.30px;top:364.06px;font-size:9.3px;color:#2c2c2c;font-weight:normal;font-family:'Liberation Sans';transform:scaleX(0.7709);">Visible</div>
<div class="t" style="left:438.88px;top:364.06px;font-size:9.3px;color:#2c2c2c;font-weight:normal;font-family:'Liberation Sans';transform:scaleX(0.8600);">True</div>
<div class="a" style="left:363px;top:384.44px;width:223px;height:1px;background:#dcdcdc"></div>
<div class="t" style="left:364.30px;top:375.90px;font-size:9.3px;color:#2c2c2c;font-weight:normal;font-family:'Liberation Sans';transform:scaleX(0.8965);">WordWrap</div>
<div class="t" style="left:438.39px;top:375.90px;font-size:9.3px;color:#2c2c2c;font-weight:normal;font-family:'Liberation Sans';transform:scaleX(0.8457);">False</div>
<svg class="a" style="left:0;top:0" width="600" height="424" viewBox="0 0 600 424"><path d="M432 264.2 C470 262.8 500 262.6 515 263.4 C524 264 527 268 526.3 273 C525.5 279 520 281.8 505 282.3 C480 283 450 283.3 433 282.6 C425.5 282.2 422.8 278 423.2 273 C423.6 268 426 264.6 432 264.2 Z" fill="none" stroke="#ee1219" stroke-width="2.2"/></svg>
<svg class="a" style="left:0;top:0" width="600" height="424"><g stroke="#ee1219" stroke-width="2" fill="none" stroke-linecap="round"><path d="M242 392 L428 97"/><path d="M453.5 70.5 L508 42"/></g></svg>
</body></html>
